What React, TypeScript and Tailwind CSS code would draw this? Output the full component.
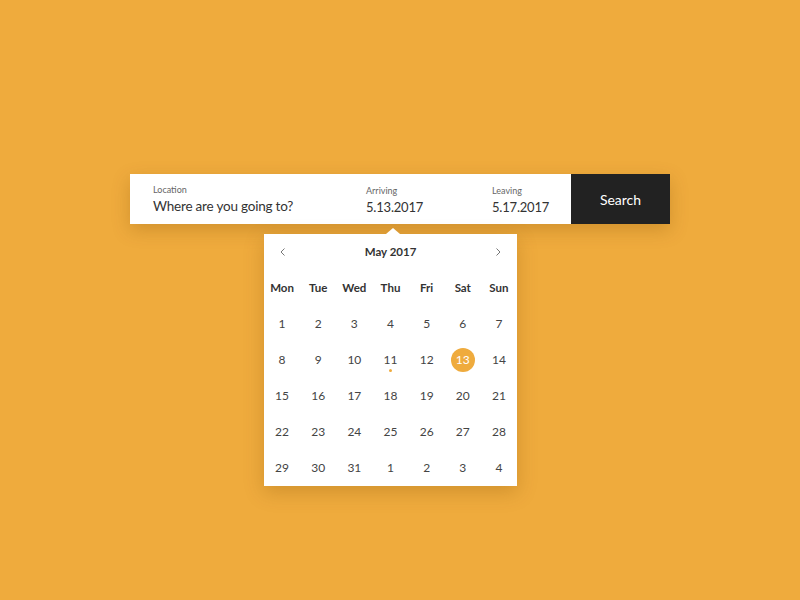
import React from "react";

const weekdays = ["Mon", "Tue", "Wed", "Thu", "Fri", "Sat", "Sun"];
const days = [
  [1, 2, 3, 4, 5, 6, 7],
  [8, 9, 10, 11, 12, 13, 14],
  [15, 16, 17, 18, 19, 20, 21],
  [22, 23, 24, 25, 26, 27, 28],
  [29, 30, 31, 1, 2, 3, 4],
];

export default function App() {
  return (
    <div
      className="w-[800px] h-[600px] bg-[#efab3d] overflow-hidden"
      style={{ fontFamily: "Lato, 'Noto Sans', sans-serif" }}
    >
      <div className="w-[540px] ml-[130px] pt-[174px]">
        <div className="flex h-[50px] shadow-[0_6px_18px_rgba(120,70,0,0.25)]">
          <div className="flex flex-1 bg-white text-[#333]">
            <div className="w-[236px] pl-[23px] pt-[10px]">
              <div className="text-[9px] text-[#666] leading-[12px]">Location</div>
              <div className="text-[13.5px] tracking-[-0.2px] leading-[20px] mt-[0px] text-[#333]">Where are you going to?</div>
            </div>
            <div className="w-[126px] pt-[11px]">
              <div className="text-[9px] text-[#666] leading-[12px]">Arriving</div>
              <div className="text-[13px] tracking-[-0.2px] leading-[20px] mt-[0px]">5.13.2017</div>
            </div>
            <div className="flex-1 pt-[11px]">
              <div className="text-[9px] text-[#666] leading-[12px]">Leaving</div>
              <div className="text-[13px] tracking-[-0.2px] leading-[20px] mt-[0px]">5.17.2017</div>
            </div>
          </div>
          <div className="w-[99px] bg-[#222222] text-white flex items-center justify-center text-[14px]">
            Search
          </div>
        </div>
        <div className="relative ml-[134px] mt-[10px] w-[253px] bg-white shadow-[0_6px_18px_rgba(120,70,0,0.25)]">
          <div
            className="absolute top-[-6px] left-[122px] w-0 h-0 border-l-[7px] border-r-[7px] border-b-[6px] border-l-transparent border-r-transparent border-b-white"
          />
          <div className="flex items-center justify-between h-[36px] px-[14px] text-[#333]">
            <svg width="10" height="10" viewBox="0 0 10 10" fill="none" stroke="#777" strokeWidth="1">
              <path d="M6.5 1.5 L3 5 L6.5 8.5" />
            </svg>
            <div className="text-[11.5px] font-bold text-[#333]">May 2017</div>
            <svg width="10" height="10" viewBox="0 0 10 10" fill="none" stroke="#777" strokeWidth="1">
              <path d="M3.5 1.5 L7 5 L3.5 8.5" />
            </svg>
          </div>
          <div className="grid grid-cols-7">
            {weekdays.map((w) => (
              <div key={w} className="h-[36px] flex items-center justify-center text-[11.5px] font-bold text-[#333]">
                {w}
              </div>
            ))}
            {days.flat().map((d, i) => {
              const selected = i === 12;
              const dot = i === 10;
              return (
                <div key={i} className="relative h-[36px] flex items-center justify-center text-[12px] text-[#444]">
                  {selected ? (
                    <div className="w-[24px] h-[24px] rounded-full bg-[#efab3d] text-white flex items-center justify-center">
                      {d}
                    </div>
                  ) : (
                    <span>{d}</span>
                  )}
                  {dot && (
                    <div className="absolute left-1/2 top-[27px] -ml-[1.5px] w-[3px] h-[3px] rounded-full bg-[#efab3d]" />
                  )}
                </div>
              );
            })}
          </div>
        </div>
      </div>
    </div>
  );
}
